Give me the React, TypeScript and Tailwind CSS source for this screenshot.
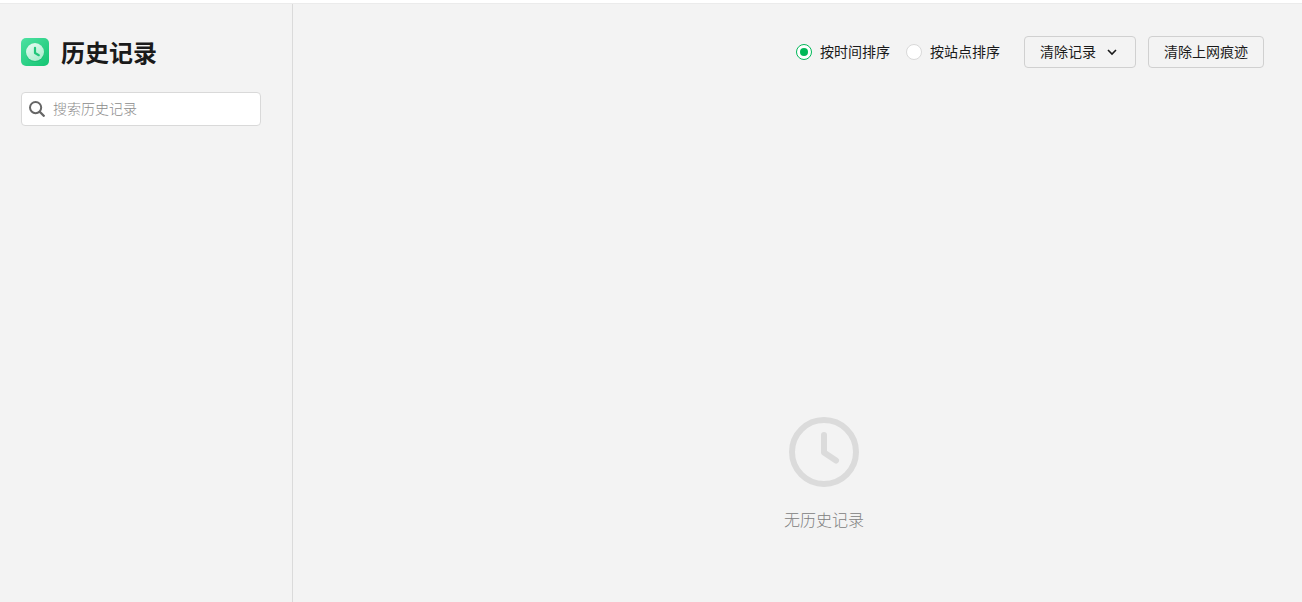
import { useState } from 'react';

type SortMode = 'time' | 'site';

const SORT_OPTIONS: { value: SortMode; label: string }[] = [
  { value: 'time', label: '按时间排序' },
  { value: 'site', label: '按站点排序' },
];

function HistoryLogo() {
  return (
    <svg className="size-7 shrink-0" viewBox="0 0 28 28" fill="none" aria-hidden="true">
      <defs>
        <linearGradient id="logo-bg" x1="2" y1="0" x2="26" y2="28" gradientUnits="userSpaceOnUse">
          <stop stopColor="#4ce0a0" />
          <stop offset="1" stopColor="#15c573" />
        </linearGradient>
        <linearGradient id="logo-face" x1="8" y1="5" x2="20" y2="23" gradientUnits="userSpaceOnUse">
          <stop stopColor="#e6fbf1" />
          <stop offset="1" stopColor="#a6ebca" />
        </linearGradient>
      </defs>
      <rect width="28" height="28" rx="5" fill="url(#logo-bg)" />
      <circle cx="14" cy="14.8" r="9.3" fill="#12a862" fillOpacity="0.3" />
      <circle cx="14" cy="14" r="9" fill="url(#logo-face)" />
      <path d="M14 9.8v5.2l3.8 2.2" stroke="#1fc67a" strokeWidth="2.2" strokeLinecap="round" strokeLinejoin="round" />
    </svg>
  );
}

function SearchIcon() {
  return (
    <svg className="size-4 shrink-0" viewBox="0 0 16 16" fill="none" stroke="#666" strokeWidth="2" aria-hidden="true">
      <circle cx="6.6" cy="6.6" r="5.6" />
      <path d="M10.6 10.6l4.9 4.9" strokeWidth="2.2" />
    </svg>
  );
}

function Sidebar() {
  const [query, setQuery] = useState('');

  return (
    <aside className="w-[293px] shrink-0 border-r border-[#dadada] pt-[30px] pr-[31px] pl-[21px]">
      <div className="flex h-9 items-center gap-3">
        <HistoryLogo />
        <h1 className="text-2xl font-bold text-[#1a1a1a]">历史记录</h1>
      </div>
      <label className="mt-[22px] flex h-[34px] items-center gap-2 rounded-[4px] border border-[#d9d9d9] bg-white px-[7px]">
        <SearchIcon />
        <input
          type="text"
          aria-label="搜索历史记录"
          className="h-full min-w-0 flex-1 bg-transparent pb-0.5 text-sm text-[#1a1a1a] outline-none placeholder:font-light placeholder:text-[#8c8c8c]"
          placeholder="搜索历史记录"
          value={query}
          onChange={e => setQuery(e.target.value)}
        />
      </label>
    </aside>
  );
}

function Toolbar() {
  const [sort, setSort] = useState<SortMode>('time');

  return (
    <div className="flex items-center justify-end text-sm text-[#1a1a1a]">
      <div className="mr-6 flex gap-4">
        {SORT_OPTIONS.map(({ value, label }) => (
          <label key={value} className="flex items-center gap-2">
            <input
              type="radio"
              name="sort"
              value={value}
              checked={sort === value}
              onChange={() => setSort(value)}
              className="grid size-4 appearance-none place-content-center rounded-full border border-[#d9d9d9] bg-white before:size-2 before:rounded-full checked:border-[#00b858] checked:before:bg-[#00b858]"
            />
            <span className="pb-0.5">{label}</span>
          </label>
        ))}
      </div>
      <button className="mr-3 flex h-8 items-center gap-2 rounded-[4px] border border-[#d0d0d0] px-[15px] hover:bg-white">
        <span className="pb-0.5">清除记录</span>
        <svg className="size-4" viewBox="0 0 16 16" fill="none" stroke="#1a1a1a" strokeWidth="1.6" aria-hidden="true">
          <path d="M4 6l4 4 4-4" />
        </svg>
      </button>
      <button className="flex h-8 items-center rounded-[4px] border border-[#d0d0d0] px-[15px] hover:bg-white">
        <span className="pb-0.5">清除上网痕迹</span>
      </button>
    </div>
  );
}

function EmptyState() {
  return (
    <div className="mt-[349px] flex flex-col items-center gap-5">
      <svg className="size-[70px]" viewBox="0 0 70 70" fill="none" stroke="#dbdbdb" strokeWidth="6" aria-hidden="true">
        <circle cx="35" cy="35" r="32" />
        <path d="M35 18v17.5l12 8" strokeLinecap="round" strokeLinejoin="round" />
      </svg>
      <p className="text-base font-light text-[#808080]">无历史记录</p>
    </div>
  );
}

export default function App() {
  return (
    <div className="flex min-h-screen flex-col bg-white pt-[3px] font-['Noto_Sans_CJK_SC',sans-serif]">
      <div className="flex flex-1 border-t border-[#ebebeb] bg-[#f3f3f3]">
        <Sidebar />
        <main className="flex-1 pt-8 pr-[38px] pb-12 pl-[91px]">
          <Toolbar />
          <EmptyState />
        </main>
      </div>
    </div>
  );
}
